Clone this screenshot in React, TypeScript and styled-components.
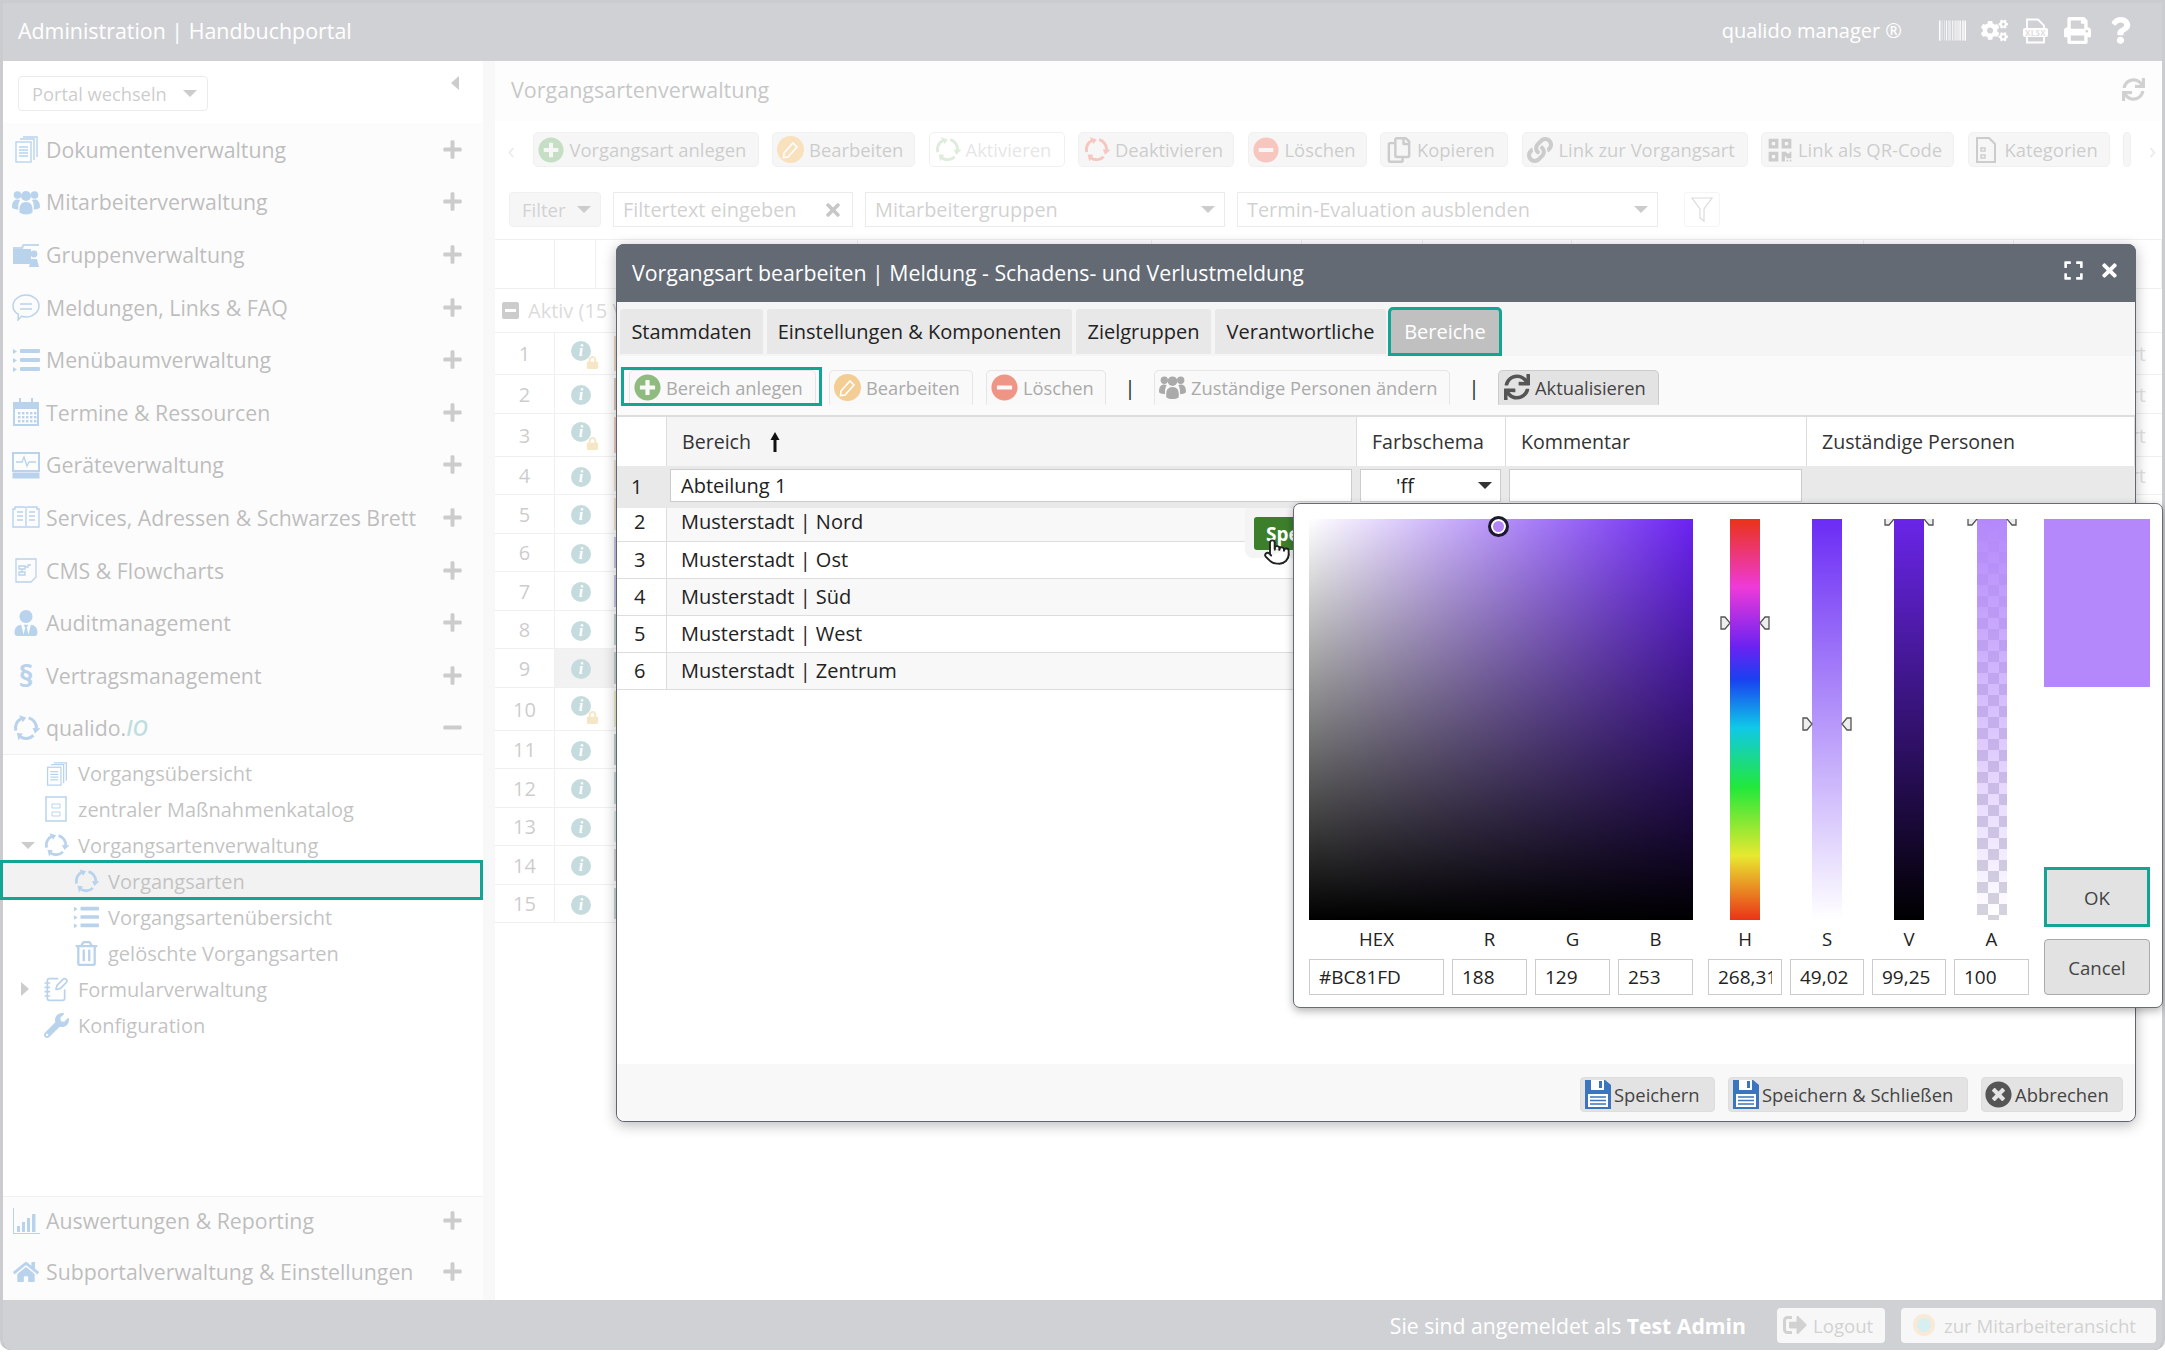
import React from 'react';
import styled, { createGlobalStyle } from 'styled-components';
import {
  FaPlusCircle, FaMinusCircle, FaTimesCircle, FaSync, FaLink, FaQrcode, FaRegCopy,
  FaBarcode, FaCogs, FaPrint, FaQuestion, FaWrench, FaHome, FaUserTie, FaLock, FaRegTrashAlt,
  FaTimes, FaExpand, FaPlus, FaMinus, FaSignOutAlt,
} from 'react-icons/fa';
import { NotebookPen, Pointer } from 'lucide-react';

const TEAL = '#12a594';
const BLUE = '#166cc0';

const Global = createGlobalStyle`
  html, body { margin: 0; padding: 0; background: #fff; }
  body { font-family: "Open Sans", "Liberation Sans", sans-serif; color: #222; }
  * { box-sizing: border-box; }
`;

const Page = styled.div`
  position: relative; width: 2165px; height: 1350px; display: flex; flex-direction: column;
  border: 3px solid #cbccd0; border-bottom: 0; border-radius: 0 0 10px 10px; background: #fff;
`;
const TopBar = styled.header`
  height: 58px; flex: none; background: #636772; color: #fff; display: flex; align-items: center;
  justify-content: space-between; padding: 0 28px 3px 15px; font-size: 21.4px;
`;
const TopRight = styled.div`display: flex; align-items: center; gap: 15px; font-size: 20px;`;
const Brand = styled.span`margin-right: 22px;`;
const TopIcon = styled.span<{ $w: number }>`
  width: ${p => p.$w}px; height: 26px; display: flex; align-items: center; justify-content: center; font-size: 27px;
`;
const Content = styled.div`flex: 1; display: flex; min-height: 0;`;
const Sidebar = styled.nav`
  width: 480px; flex: none; display: flex; flex-direction: column; background: #f4f4f4; color: #222;
`;
const SideTop = styled.div`
  height: 62px; flex: none; display: flex; align-items: flex-start; justify-content: space-between;
  padding: 15px 24px 0 15px; background: #fff;
`;
const SelectBox = styled.div<{ $w: number }>`
  width: ${p => p.$w}px; height: 35px; border: 1px solid #bbb; border-radius: 4px; display: flex; align-items: center;
  justify-content: space-between; padding: 0 10px 0 13px; background: #fff; font-size: 18.3px; color: #555;
`;
const Caret = styled.span<{ $dir?: 'down' | 'left' | 'right'; $c?: string; $s?: number }>`
  display: inline-block; width: 0; height: 0; flex: none;
  ${p => {
    const s = p.$s ?? 7; const c = p.$c ?? '#444';
    if (p.$dir === 'left') return `border-top:${s}px solid transparent;border-bottom:${s}px solid transparent;border-right:${s + 1}px solid ${c};`;
    if (p.$dir === 'right') return `border-top:${s}px solid transparent;border-bottom:${s}px solid transparent;border-left:${s + 1}px solid ${c};`;
    return `border-left:${s}px solid transparent;border-right:${s}px solid transparent;border-top:${s}px solid ${c};`;
  }}
`;
const MenuRow = styled.div<{ $h?: number; $line?: boolean; $pb?: number }>`
  height: ${p => p.$h ?? 52.6}px; flex: none; display: flex; align-items: center; padding: 0 20px ${p => p.$pb ?? 0}px 9px;
  font-size: 21.3px; color: #222; ${p => p.$line ? 'border-top: 1px solid #ccc;' : ''}
`;
const MenuIcon = styled.span`
  width: 28px; margin-right: 6px; height: 28px; flex: none; display: flex; align-items: center; justify-content: center;
  color: ${BLUE}; font-size: 26px;
`;
const Para = styled.b`font-size: 31px; line-height: 28px;`;
const MenuLabel = styled.span`flex: 1; white-space: nowrap;`;
const Italic = styled.i`color: #2a8f9e; font-weight: 600;`;
const RowSign = styled.span`font-size: 21px; color: #555; display: flex;`;
const SubList = styled.div`
  flex: 1; background: #fff; border-top: 1px solid #ccc; display: flex; flex-direction: column; min-height: 0;
`;
const SubRow = styled.div<{ $indent: number; $active?: boolean }>`
  position: relative; height: 36px; flex: none; display: flex; align-items: center; padding-left: ${p => p.$indent}px;
  font-size: 20px; color: #333; background: ${p => p.$active ? '#d4d4d4' : 'transparent'}; white-space: nowrap;
`;
const SubIcon = styled.span`
  width: 26px; height: 28px; margin-right: 9px; flex: none; display: flex; align-items: center; justify-content: center;
  color: ${BLUE}; font-size: 25px;
`;
const CaretSlot = styled.span`width: 25px; flex: none; display: flex; padding-left: 3px;`;
const Highlight = styled.span`
  position: absolute; left: -3px; right: 0; top: -3px; bottom: -1px; border: 3px solid ${TEAL}; z-index: 20;
`;
const Gutter = styled.div`width: 12px; flex: none; background: #e6e6e6;`;
const Main = styled.main`flex: 1; min-width: 0; display: flex; flex-direction: column; background: #fff; color: #444;`;
const TitleBar = styled.div`
  height: 60px; flex: none; display: flex; align-items: center; justify-content: space-between; padding: 0 17px 4px 16px;
  font-size: 21.5px; font-weight: 400; color: #444; background: #f8f8f8;
`;
const SmallRefresh = styled.span`color: #666; font-size: 23px; display: flex;`;
const ToolRow = styled.div<{ $mt: number; $pl: number; $gap?: number }>`
  height: 35px; flex: none; margin-top: ${p => p.$mt}px; padding-left: ${p => p.$pl}px; display: flex; align-items: center;
  gap: ${p => p.$gap ?? 13.5}px; white-space: nowrap;
`;
const ToolBtn = styled.div<{ $w: number; $faint?: boolean }>`
  width: ${p => p.$w}px; height: 35px; flex: none; border: 1px solid #ccc; border-radius: 5px; display: flex; align-items: center;
  gap: 5px; padding-left: 4px; background: ${p => p.$faint ? '#fff' : '#e0e0e0'}; font-size: 18.4px; color: ${p => p.$faint ? '#aaa' : '#555'};
`;
const BtnIcon = styled.span<{ $c: string; $s?: number }>`
  flex: none; width: 27px; height: 28px; display: flex; align-items: center; justify-content: center; color: ${p => p.$c};
  font-size: ${p => p.$s ?? 26}px;
`;
const Chevron = styled.span`color: #bbb; font-size: 24px; width: 16px; text-align: center; flex: none; line-height: 33px;`;
const FilterBtn = styled.div`
  width: 92px; height: 35px; flex: none; display: flex; align-items: center; justify-content: space-between; padding: 0 9px 0 12px;
  background: #e0e0e0; border-radius: 4px; font-size: 18.6px; color: #666; border: 1px solid #ccc;
`;
const FilterField = styled.div<{ $w: number }>`
  width: ${p => p.$w}px; height: 35px; flex: none; display: flex; align-items: center; justify-content: space-between; padding: 0 9px;
  border: 1px solid #bbb; font-size: 19.9px; color: #666; background: #fff;
`;
const ClearMark = styled.span`font-size: 20px; color: #444; display: flex;`;
const FunnelBox = styled.div`
  width: 36px; height: 35px; flex: none; margin-left: 14px; border: 1px solid #ddd; border-radius: 3px; display: flex;
  align-items: center; justify-content: center; color: #888;
`;
const GridHead = styled.div`
  margin-top: 12px; height: 49px; flex: none; display: grid; grid-template-columns: 60px 41px 262px 294px 150px 121px 149px 292px 150px 1fr;
  border-top: 1px solid #ccc;
`;
const HeadCell = styled.div`border-right: 1px solid #ccc;`;
const GroupRow = styled.div`
  height: 45px; flex: none; display: flex; align-items: center; gap: 9px; padding-left: 7px; font-size: 20px; color: #888;
  border-top: 1px solid #ccc; border-bottom: 1px solid #ccc; white-space: nowrap;
`;
const MinusBox = styled.span`
  width: 17px; height: 17px; background: #555; border-radius: 2px; display: flex; align-items: center; justify-content: center;
  &::after { content: ""; width: 11px; height: 3px; background: #fff; }
`;
const DataRow = styled.div<{ $h: number }>`
  height: ${p => p.$h}px; flex: none; display: flex; align-items: stretch; border-bottom: 1px solid #ccc;
`;
const NumCell = styled.div`
  width: 60px; flex: none; display: flex; align-items: center; justify-content: center; border-right: 1px solid #ccc;
  font-size: 20px; color: #555;
`;
const InfoCell = styled.div<{ $on?: boolean; $lock?: boolean }>`
  position: relative; width: 59px; flex: none; display: flex; align-items: flex-start; padding: ${p => p.$lock ? 8 : 10}px 0 0 16px;
  background: ${p => p.$on ? '#d4d4d4' : 'transparent'};
`;
const InfoDot = styled.span`
  width: 20px; height: 20px; border-radius: 50%; background: #3e878e; color: #fff; display: flex; align-items: center;
  justify-content: center; font: italic bold 16px "Liberation Serif", serif;
`;
const LockMark = styled.span`position: absolute; left: 31px; top: 23px; font-size: 13px; color: #dcb040; display: flex;`;
const ColorBar = styled.span<{ $c: string }>`width: 6px; margin: 3px 0; flex: none; background: ${p => p.$c};`;
const RowEnd = styled.span`flex: 1; text-align: right; padding-right: 16px; font-size: 20px; color: #999; align-self: center;`;
const Veil = styled.div`position: absolute; inset: 0; background: rgba(255,255,255,.7); z-index: 10; border-radius: 0 0 8px 8px;`;
const PageFoot = styled.footer`
  height: 50px; flex: none; background: #636772; color: #fff; display: flex; align-items: center; justify-content: flex-end;
  padding-right: 6px; font-size: 21.2px; border-radius: 0 0 8px 8px;
`;
const FootBtn = styled.div<{ $w: number; $ml: number }>`
  width: ${p => p.$w}px; margin-left: ${p => p.$ml}px; height: 35px; flex: none; display: flex; align-items: center; gap: 6px; padding-left: 6px;
  background: #e4e4e4; border-radius: 4px; font-size: 18.6px; color: #666;
`;
const Ring = styled.span`
  width: 22px; height: 22px; border-radius: 50%; background: #7dc8d0; border: 4px solid #e8b878; margin-left: 6px; margin-right: 3px;
`;

const Dialog = styled.section`
  position: absolute; left: 613px; top: 241px; width: 1520px; height: 878px; z-index: 30; display: flex; flex-direction: column;
  background: #fff; border: 1px solid #5f6671; border-radius: 8px; box-shadow: 0 3px 14px rgba(0,0,0,.28);
`;
const DialogHead = styled.div`
  height: 58px; flex: none; margin: -1px -1px 0; padding: 0 16px 2px 16px; background: #636a74; color: #fff; border-radius: 8px 8px 0 0; font-size: 21.3px;
  display: flex; align-items: center; justify-content: space-between;
`;
const HeadIcons = styled.div`display: flex; align-items: center; gap: 15px; font-size: 21px; margin-bottom: 3px;`;
const Tabs = styled.div`
  height: 54px; flex: none; padding: 7px 0 0 3px; background: #f5f5f5; display: flex; align-items: flex-start; gap: 4px;
`;
const Tab = styled.div<{ $w: number; $active?: boolean }>`
  width: ${p => p.$w}px; height: 45px; display: flex; align-items: center; justify-content: center; font-size: 20px;
  background: ${p => p.$active ? '#c0c0c0' : '#e8e8e8'}; color: ${p => p.$active ? '#fff' : '#222'}; border-radius: 3px 3px 0 0;
  ${p => p.$active ? `outline: 3px solid ${TEAL}; outline-offset: -1px; font-weight: 500;` : ''}
`;
const DialogTools = styled.div`
  height: 61px; flex: none; display: flex; align-items: center; padding: 3px 0 0 12px; background: #fafafa; gap: 13px; position: relative;
  border-bottom: 2px solid #ddd;
`;
const DTool = styled.div<{ $w: number; $on?: boolean }>`
  position: relative; width: ${p => p.$w}px; height: 35px; flex: none; border: 1px solid ${p => p.$on ? '#ccc' : '#e6e6e6'}; border-bottom-color: transparent;
  border-radius: 5px 5px 0 0; display: flex; align-items: center; gap: 5px; padding-left: 4px; font-size: 18.3px;
  color: ${p => p.$on ? '#444' : '#aaa'}; background: ${p => p.$on ? '#e3e3e3' : '#f9f9f9'}; white-space: nowrap;
`;
const TealBox = styled.span`position: absolute; left: -9px; right: -7px; top: -4px; bottom: -2px; border: 3px solid ${TEAL};`;
const Sep = styled.span`font-size: 20px; color: #222; width: 22px; flex: none; text-align: center;`;
const Tbl = styled.div`position: relative; display: grid; grid-template-columns: 50px 690px 149px 301px 1fr; flex: none;`;
const Th = styled.div<{ $gray?: boolean }>`
  height: 49px; display: flex; align-items: center; gap: 18px; padding-left: 15px; font-size: 19.6px; color: #333;
  background: ${p => p.$gray ? '#f5f5f5' : '#fff'}; border-right: 1px solid #ddd;
`;
const EditCell = styled.div<{ $num?: boolean }>`
  height: 42px; background: #e9e9e9; padding: 3px 5px 6px 3px; font-size: 20px; color: #222;
  ${p => p.$num ? 'display:flex;align-items:center;padding:0 0 2px 14px;' : ''}
`;
const EditInput = styled.div<{ $pl?: number }>`
  height: 100%; background: #fff; border: 1px solid #ccc; display: flex; align-items: center; justify-content: space-between;
  padding: 0 8px 1px ${p => p.$pl ?? 10}px; font-size: 20px; overflow: hidden;
`;
const Td = styled.div<{ $h: number; $shade?: boolean; $num?: boolean; $pb?: number }>`
  height: ${p => p.$h}px; display: flex; align-items: center; font-size: 20px; color: #222; border-bottom: 1px solid #ddd;
  background: ${p => p.$shade ? '#f8f8f8' : '#fff'}; padding-left: ${p => p.$num ? 17 : 14}px; padding-bottom: ${p => p.$pb ?? 0}px; border-right: 1px solid #ddd;
  ${p => p.$num ? '' : 'grid-column: 2 / 3;'}
`;
const TdRest = styled.div<{ $h: number }>`height: ${p => p.$h}px; grid-column: 3 / 6;`;
const SavePop = styled.div`
  position: absolute; left: 628px; top: 91px; width: 60px; height: 50px; background: #f4f4f4; border-radius: 0 0 0 8px; padding: 9px 0 0 9px;
`;
const GreenBtn = styled.div`
  height: 33px; width: 100px; background: #3d7e2b; color: #fff; font-weight: 700; border-radius: 3px; font-size: 19px;
  display: flex; align-items: center; padding-left: 12px;
`;
const Hand = styled.span`position: absolute; left: 646px; top: 121px; display: flex; z-index: 2; color: #222;`;
const Spacer = styled.div`flex: 1;`;
const DialogFoot = styled.div`
  height: 57px; flex: none; background: #f8f8f8; border-radius: 0 0 8px 8px; display: flex; align-items: center; justify-content: flex-end; gap: 13px; padding: 3px 12px 0 0;
`;
const FootAction = styled.div<{ $w: number }>`
  width: ${p => p.$w}px; height: 35px; flex: none; background: #e3e3e3; border: 1px solid #ddd; border-radius: 4px; display: flex; align-items: center;
  gap: 3px; padding-left: 3px; font-size: 18.4px; color: #444; white-space: nowrap;
`;

const Picker = styled.div`
  position: absolute; left: 676px; top: 258px; width: 870px; height: 505px; z-index: 3; background: #fff; border: 1px solid #666c76;
  border-radius: 7px; box-shadow: 0 3px 8px rgba(0,0,0,.3); padding: 15px 0 0 15px;
  display: grid; grid-template-columns: 135px 75px 75px 75px 81px 74px 74px 75px 113px; column-gap: 8px;
  grid-template-rows: 401px 39px 36px; align-items: start;
`;
const SVArea = styled.div`
  grid-column: 1 / 5; position: relative; height: 401px;
  background: linear-gradient(to top, #000, transparent), linear-gradient(to right, #fff, #6a22f2);
`;
const SVDot = styled.span`
  position: absolute; left: 179px; top: -3px; width: 21px; height: 21px; border-radius: 50%; border: 3px solid #1a1a2a;
  background: #b386f7; box-shadow: inset 0 0 0 2px #fff;
`;
const BarCol = styled.div<{ $pad?: boolean }>`
  position: relative; height: 401px; display: flex; justify-content: center; padding-left: ${p => p.$pad ? 7 : 0}px;
`;
const BarClip = styled.div<{ $bg: string }>`
  position: relative; width: 30px; height: 401px; background: ${p => p.$bg}; clip-path: inset(0 -20px);
`;
const Handle = styled.svg<{ $y: number }>`position: absolute; left: -10px; top: ${p => p.$y - 7}px;`;
const Swatch = styled.div`width: 106px; height: 168px; background: #b488fb;`;
const SideCol = styled.div`grid-column: 9; grid-row: 1 / 4; padding-left: 7px; display: flex; flex-direction: column;`;
const OkBtn = styled.div`
  height: 60px; width: 106px; border: 3px solid ${TEAL}; background: #e2e2e2; display: flex; align-items: center; justify-content: center;
  font-size: 18.6px; color: #444;
`;
const CancelBtn = styled.div`
  margin-top: 12px; height: 56px; width: 106px; border: 1px solid #aaa; border-radius: 4px; background: #e2e2e2; display: flex; align-items: center; justify-content: center;
  font-size: 18.6px; color: #444;
`;
const PLabel = styled.div<{ $pad?: boolean }>`
  height: 36px; display: flex; align-items: center; justify-content: center; font-size: 18.6px; color: #222; padding-left: ${p => p.$pad ? 7 : 0}px;
`;
const PFieldWrap = styled.div<{ $pad?: boolean }>`padding-left: ${p => p.$pad ? 7 : 0}px;`;
const PField = styled.div`
  height: 36px; border: 1px solid #ccc; background: #fff; padding: 0 9px; display: flex; align-items: center; font-size: 19px; color: #222; white-space: nowrap;
`;
const PText = styled.span`display: block; overflow: hidden; min-width: 0;`;
const SwatchWrap = styled.div`height: 408px; display: flex; flex-direction: column; justify-content: space-between;`;

/* ---- drawn icons ---- */
const Docs = ({ s = 28 }: { s?: number }) => (
  <svg width={s} height={s} viewBox="0 0 28 28" fill="none" stroke="currentColor" strokeWidth="1.4">
    <path d="M11 2h14v20M8 4h14v21" /><rect x="4" y="7" width="15" height="20" fill="#fff" />
    <path d="M7 12h9M7 15h9M7 18h9M7 21h9" />
  </svg>
);
const Users = ({ s = 28 }: { s?: number }) => (
  <svg width={s} height={s} viewBox="0 0 28 28" fill="currentColor">
    <circle cx="14" cy="8" r="5" /><circle cx="5.500" cy="7" r="3.800" /><circle cx="22.500" cy="7" r="3.800" />
    <path d="M0 19c0-5 2-7.500 5.500-7.500 1 0 1.800.2 2.500.6-1.200 1.700-1.800 4-1.800 7v2.400C3 21.300 0 20.500 0 19zM28 19c0-5-2-7.500-5.500-7.500-1 0-1.800.2-2.500.6 1.200 1.700 1.800 4 1.800 7v2.400c3.200-.2 6.200-1 6.200-2.500z" />
    <path d="M14 14c4.600 0 6.500 3 6.500 7.500v3c-3 2.600-10 2.600-13 0v-3C7.500 17 9.400 14 14 14z" />
  </svg>
);
const FolderUser = () => (
  <svg width="28" height="28" viewBox="0 0 28 28" fill="currentColor">
    <path d="M1 7h8l2 -3h16v2H12L11 9h-1v15H1z" opacity=".85" /><path d="M1 9h18v15H1z" /><circle cx="22" cy="14" r="3.4" /><path d="M17 27l2-8h6l2 8z" />
  </svg>
);
const Bubble = () => (
  <svg width="28" height="28" viewBox="0 0 28 28" fill="none" stroke="currentColor" strokeWidth="1.5">
    <path d="M14 2c7 0 13 5 13 11s-6 11-13 11c-1.500 0-3-.2-4.400-.7L6 27l.5-5.500C3 19.500 1 16.500 1 13 1 7 7 2 14 2z" /><path d="M8 11h12M8 16h12" />
  </svg>
);
const TreeList = ({ s = 28 }: { s?: number }) => (
  <svg width={s} height={s} viewBox="0 0 28 28" fill="currentColor">
    <path d="M1 3l4 2.500L1 8zM1 12l4 2.500L1 17zM1 21l4 2.500L1 26z" /><rect x="8" y="3" width="20" height="4" rx="1" /><rect x="8" y="12" width="20" height="4" rx="1" /><rect x="8" y="21" width="20" height="4" rx="1" />
  </svg>
);
const Cal = () => (
  <svg width="28" height="28" viewBox="0 0 28 28" fill="currentColor">
    <path d="M1 4h26v24H1zM3 11v15h22V11z" fillRule="evenodd" /><rect x="7" y="0" width="2" height="7" /><rect x="19" y="0" width="2" height="7" />
    {[14, 18, 22].map(y => [6, 10, 14, 18, 22].map(x => <rect key={`${x}${y}`} x={x} y={y} width="2.400" height="2.400" />))}
  </svg>
);
const Device = () => (
  <svg width="28" height="28" viewBox="0 0 28 28" fill="none" stroke="currentColor">
    <rect x="1" y="2" width="26" height="18" strokeWidth="2" /><path d="M4 11h6l2-5 3 9 2-4h7" strokeWidth="1.300" /><rect x="1" y="22" width="26" height="5" fill="currentColor" />
  </svg>
);
const Book = () => (
  <svg width="28" height="22" viewBox="0 0 28 22" fill="none" stroke="currentColor" strokeWidth="1.400">
    <path d="M1 3h2V1h9c1 0 2 .5 2 1.500C14 1.500 15 1 16 1h9v2h2v18H1z" /><path d="M14 3v17M5 6h6M5 10h6M5 14h6M17 6h6M17 10h6M17 14h6" />
  </svg>
);
const FlowPage = () => (
  <svg width="24" height="28" viewBox="0 0 24 28" fill="none" stroke="currentColor" strokeWidth="1.300">
    <path d="M2 3h20v18l-5 5H2z" /><path d="M5 10h6v3H5zM5 16h6v3H5zM8 13v3M11 11h3v-2h3" />
  </svg>
);
const Catalog = () => (
  <svg width="24" height="28" viewBox="0 0 24 28" fill="none" stroke="currentColor" strokeWidth="1.500">
    <path d="M2 2h20v24H2z" /><path d="M8 9h8v4H8zM8 17h8v4H8z" strokeWidth="1" />
  </svg>
);
const Bars = () => (
  <svg width="28" height="28" viewBox="0 0 28 28" fill="currentColor">
    <path d="M1 1h1v25h26v1H1z" /><rect x="5" y="19" width="3" height="6" /><rect x="10" y="15" width="3" height="10" /><rect x="15" y="11" width="3" height="14" /><rect x="20" y="7" width="3.500" height="18" />
  </svg>
);
const polar = (deg: number, r: number) => {
  const a = (deg * Math.PI) / 180;
  return `${(14 + r * Math.cos(a)).toFixed(2)} ${(14 + r * Math.sin(a)).toFixed(2)}`;
};
const Spin = ({ s = 28, c = 'currentColor' }: { s?: number; c?: string }) => (
  <svg width={s} height={s} viewBox="0 0 28 28" fill={c}>
    {[-75, 45, 165].map(a0 => (
      <g key={a0}>
        <path d={`M${polar(a0, 10.5)} A10.500 10.500 0 0 1 ${polar(a0 + 78, 10.5)}`} fill="none" stroke={c} strokeWidth="3" />
        <path d={`M${polar(a0 + 76, 14.5)} L${polar(a0 + 76, 6.5)} L${polar(a0 + 106, 10.5)}z`} />
      </g>
    ))}
  </svg>
);
const Pencil = ({ bg }: { bg: string }) => (
  <svg width="27" height="27" viewBox="0 0 27 27">
    <circle cx="13.500" cy="13.500" r="13.500" fill={bg} />
    <path d="M7 17l9-10 4 4-9 10-4.500.500z" fill="none" stroke="#fff" strokeWidth="1.600" />
  </svg>
);
const KatDoc = () => (
  <svg width="22" height="28" viewBox="0 0 22 28" fill="none" stroke="currentColor" strokeWidth="2">
    <path d="M2 2h12l6 6v18H2z" /><path d="M6 12h4v3H6zM6 19h4v3H6z" strokeWidth="1.400" />
  </svg>
);
const Xlsx = () => (
  <svg width="25" height="26" viewBox="0 0 25 26" fill="none" stroke="#fff" strokeWidth="1.800">
    <path d="M4 10V1.500h11l6 6V10M4 19v5.500h17V19" />
    <rect x="0" y="10" width="25" height="9" rx="2" fill="#fff" stroke="none" />
    <text x="12.500" y="17.500" fontSize="8" fontFamily="Open Sans" fontWeight="700" fill="#8a8e96" stroke="none" textAnchor="middle" letterSpacing=".4">XLSX</text>
  </svg>
);
const Funnel = () => (
  <svg width="22" height="26" viewBox="0 0 22 26" fill="none" stroke="currentColor" strokeWidth="1.200">
    <path d="M1 1h20l-8 11v12l-4-3v-9z" />
  </svg>
);
const UpArrow = () => (
  <svg width="12" height="20" viewBox="0 0 12 20" fill="#111"><path d="M6 0l4.500 8H7.500v12h-3V8h-3z" /></svg>
);
const Floppy = () => (
  <svg width="26" height="30" viewBox="0 0 26 30">
    <path d="M0 1h20l6 5v24H0z" fill="#3a75bd" />
    <path d="M6 1h13v10H6z" fill="#fff" /><path d="M14 2h3v7h-3z" fill="#3a75bd" />
    <path d="M3 15h20v13H3z" fill="#fff" /><path d="M5 18h16M5 21.500h16M5 25h16" stroke="#3a75bd" strokeWidth="1.500" />
  </svg>
);
const HandleMarks = ({ y }: { y: number }) => (
  <Handle $y={y} width="50" height="14" viewBox="0 0 50 14" fill="#eee" stroke="#555" strokeWidth="1.300">
    <path d="M1 1h4l5 6-5 6H1zM49 1h-4l-5 6 5 6h4z" />
  </Handle>
);

const menuTop = [
  { t: 'Dokumentenverwaltung', i: <Docs /> },
  { t: 'Mitarbeiterverwaltung', i: <Users /> },
  { t: 'Gruppenverwaltung', i: <FolderUser /> },
  { t: 'Meldungen, Links & FAQ', i: <Bubble /> },
  { t: 'Menübaumverwaltung', i: <TreeList /> },
  { t: 'Termine & Ressourcen', i: <Cal /> },
  { t: 'Geräteverwaltung', i: <Device /> },
  { t: 'Services, Adressen & Schwarzes Brett', i: <Book /> },
  { t: 'CMS & Flowcharts', i: <FlowPage /> },
  { t: 'Auditmanagement', i: <FaUserTie /> },
  { t: 'Vertragsmanagement', i: <Para>§</Para> },
];
const mainTools = [
  { t: 'Vorgangsart anlegen', w: 226, i: <BtnIcon $c="#3f8f3a"><FaPlusCircle /></BtnIcon> },
  { t: 'Bearbeiten', w: 143, i: <BtnIcon $c=""><Pencil bg="#e89a20" /></BtnIcon> },
  { t: 'Aktivieren', w: 136, faint: true, i: <BtnIcon $c="#8cc088"><Spin s={27} /></BtnIcon> },
  { t: 'Deaktivieren', w: 156, i: <BtnIcon $c="#e0402a"><Spin s={27} /></BtnIcon> },
  { t: 'Löschen', w: 119, i: <BtnIcon $c="#e0402a"><FaMinusCircle /></BtnIcon> },
  { t: 'Kopieren', w: 128, i: <BtnIcon $c="#555"><FaRegCopy /></BtnIcon> },
  { t: 'Link zur Vorgangsart', w: 226, i: <BtnIcon $c="#555"><FaLink /></BtnIcon> },
  { t: 'Link als QR-Code', w: 193, i: <BtnIcon $c="#555"><FaQrcode /></BtnIcon> },
  { t: 'Kategorien', w: 142, i: <BtnIcon $c="#555"><KatDoc /></BtnIcon> },
];
const rowH = [42, 39, 43, 38, 39, 38, 39, 38, 39, 43, 38, 39, 38, 39, 38];
const rowBars = ['#c08a3c', '#8a4a2c', '#c8503a', '#d0a870', '#c8a070', '#3c4ab0', '#3c4ab0', '#3c7070', '#3c7070', '#c8c040', '#3c7070', '#3c7878', '#88c0a8', '#777', '#3c7868'];
const locked = [0, 2, 9];
const areas = ['Musterstadt | Nord', 'Musterstadt | Ost', 'Musterstadt | Süd', 'Musterstadt | West', 'Musterstadt | Zentrum'];
const fields: [string, string, boolean][] = [
  ['HEX', '#BC81FD', false], ['R', '188', false], ['G', '129', false], ['B', '253', false],
  ['H', '268,31', true], ['S', '49,02', false], ['V', '99,25', false], ['A', '100', false],
];
const HUE = 'linear-gradient(to bottom,#ea3317 0%,#ee3ad8 17%,#6a22f2 32%,#1a40f0 40%,#10c8e8 52%,#22e83a 67%,#e8e830 84%,#ea3317 100%)';
const SAT = 'linear-gradient(to bottom,#6b2cf5,#fff)';
const VAL = 'linear-gradient(to bottom,#6a25e8,#000)';
const ALPHA = 'linear-gradient(to bottom,#b488fb,transparent),repeating-conic-gradient(#d4d4dc 0 25%,#fff 0 50%) 0 0/22px 22px';

export default function App() {
  return (
    <>
      <Global />
      <Page>
        <TopBar>
          <span>Administration | Handbuchportal</span>
          <TopRight>
            <Brand>qualido manager ®</Brand>
            <TopIcon $w={27}><FaBarcode /></TopIcon>
            <TopIcon $w={27}><FaCogs /></TopIcon>
            <TopIcon $w={25}><Xlsx /></TopIcon>
            <TopIcon $w={28}><FaPrint /></TopIcon>
            <TopIcon $w={28}><FaQuestion /></TopIcon>
          </TopRight>
        </TopBar>
        <Content>
          <Sidebar>
            <SideTop>
              <SelectBox $w={190}>Portal wechseln <Caret $c="#555" /></SelectBox>
              <Caret $dir="left" $c="#555" />
            </SideTop>
            {menuTop.map(m => (
              <MenuRow key={m.t}>
                <MenuIcon>{m.i}</MenuIcon>
                <MenuLabel>{m.t}</MenuLabel>
                <RowSign><FaPlus /></RowSign>
              </MenuRow>
            ))}
            <MenuRow>
              <MenuIcon><Spin /></MenuIcon>
              <MenuLabel>qualido.<Italic>IO</Italic></MenuLabel>
              <RowSign><FaMinus /></RowSign>
            </MenuRow>
            <SubList>
              <SubRow $indent={15}><CaretSlot /><SubIcon><Docs s={25} /></SubIcon>Vorgangsübersicht</SubRow>
              <SubRow $indent={15}><CaretSlot /><SubIcon><Catalog /></SubIcon>zentraler Maßnahmenkatalog</SubRow>
              <SubRow $indent={15}><CaretSlot><Caret $c="#555" /></CaretSlot><SubIcon><Spin s={26} /></SubIcon>Vorgangsartenverwaltung</SubRow>
              <SubRow $indent={70} $active><SubIcon><Spin s={26} /></SubIcon>Vorgangsarten<Highlight /></SubRow>
              <SubRow $indent={70}><SubIcon><TreeList s={26} /></SubIcon>Vorgangsartenübersicht</SubRow>
              <SubRow $indent={70}><SubIcon><FaRegTrashAlt /></SubIcon>gelöschte Vorgangsarten</SubRow>
              <SubRow $indent={15}><CaretSlot><Caret $dir="right" $c="#555" /></CaretSlot><SubIcon><NotebookPen size={27} strokeWidth={1.6} /></SubIcon>Formularverwaltung</SubRow>
              <SubRow $indent={15}><CaretSlot /><SubIcon><FaWrench /></SubIcon>Konfiguration</SubRow>
              <Spacer />
            </SubList>
            <MenuRow $h={51} $line $pb={3}>
              <MenuIcon><Bars /></MenuIcon><MenuLabel>Auswertungen &amp; Reporting</MenuLabel><RowSign><FaPlus /></RowSign>
            </MenuRow>
            <MenuRow $h={53} $pb={4}>
              <MenuIcon><FaHome /></MenuIcon><MenuLabel>Subportalverwaltung &amp; Einstellungen</MenuLabel><RowSign><FaPlus /></RowSign>
            </MenuRow>
          </Sidebar>
          <Gutter />
          <Main>
            <TitleBar>
              <span>Vorgangsartenverwaltung</span>
              <SmallRefresh><FaSync /></SmallRefresh>
            </TitleBar>
            <ToolRow $mt={11} $pl={8}>
              <Chevron>‹</Chevron>
              {mainTools.map(b => (
                <ToolBtn key={b.t} $w={b.w} $faint={b.faint}>{b.i}{b.t}</ToolBtn>
              ))}
              <ToolBtn $w={8} />
              <Chevron>›</Chevron>
            </ToolRow>
            <ToolRow $mt={25} $pl={14} $gap={12}>
              <FilterBtn>Filter <Caret $c="#555" /></FilterBtn>
              <FilterField $w={240}>Filtertext eingeben <ClearMark><FaTimes /></ClearMark></FilterField>
              <FilterField $w={360}>Mitarbeitergruppen <Caret $c="#555" /></FilterField>
              <FilterField $w={421}>Termin-Evaluation ausblenden <Caret $c="#555" /></FilterField>
              <FunnelBox><Funnel /></FunnelBox>
            </ToolRow>
            <GridHead>
              {Array.from({ length: 10 }, (_, i) => <HeadCell key={i} />)}
            </GridHead>
            <GroupRow><MinusBox />Aktiv (15 Vorgangsarten)</GroupRow>
            {rowH.map((h, i) => (
              <DataRow key={i} $h={h}>
                <NumCell>{i + 1}</NumCell>
                <InfoCell $on={i === 8} $lock={locked.includes(i)}>
                  <InfoDot>i</InfoDot>
                  {locked.includes(i) && <LockMark><FaLock /></LockMark>}
                </InfoCell>
                <ColorBar $c={rowBars[i]} />
                {i < 4 && <RowEnd>aktiviert</RowEnd>}
              </DataRow>
            ))}
          </Main>
        </Content>
        <PageFoot>
          <span>Sie sind angemeldet als <b>Test Admin</b></span>
          <FootBtn $w={108} $ml={31}><FaSignOutAlt size={24} />Logout</FootBtn>
          <FootBtn $w={255} $ml={16}><Ring />zur Mitarbeiteransicht</FootBtn>
        </PageFoot>
        <Veil />
        <Dialog>
          <DialogHead>
            <span>Vorgangsart bearbeiten | Meldung - Schadens- und Verlustmeldung</span>
            <HeadIcons><FaExpand /><FaTimes /></HeadIcons>
          </DialogHead>
          <Tabs>
            <Tab $w={143}>Stammdaten</Tab>
            <Tab $w={305}>Einstellungen &amp; Komponenten</Tab>
            <Tab $w={135}>Zielgruppen</Tab>
            <Tab $w={171}>Verantwortliche</Tab>
            <Tab $w={110} $active>Bereiche</Tab>
          </Tabs>
          <DialogTools>
            <DTool $w={187}>
              <TealBox />
              <BtnIcon $c="#8fbb7f" $s={27}><FaPlusCircle /></BtnIcon>Bereich anlegen
            </DTool>
            <DTool $w={144}><BtnIcon $c=""><Pencil bg="#f3cd94" /></BtnIcon>Bearbeiten</DTool>
            <DTool $w={120}><BtnIcon $c="#ef9585" $s={27}><FaMinusCircle /></BtnIcon>Löschen</DTool>
            <Sep>|</Sep>
            <DTool $w={296}><BtnIcon $c="#aaa"><Users /></BtnIcon>Zuständige Personen ändern</DTool>
            <Sep>|</Sep>
            <DTool $w={161} $on><BtnIcon $c="#555"><FaSync /></BtnIcon>Aktualisieren</DTool>
          </DialogTools>
          <Tbl>
            <Th />
            <Th $gray>Bereich <UpArrow /></Th>
            <Th>Farbschema</Th>
            <Th>Kommentar</Th>
            <Th>Zuständige Personen</Th>
            <EditCell $num>1</EditCell>
            <EditCell><EditInput>Abteilung 1</EditInput></EditCell>
            <EditCell><EditInput $pl={35}>'ff <Caret $c="#333" $s={7} /></EditInput></EditCell>
            <EditCell><EditInput /></EditCell>
            <EditCell />
            {areas.map((a, i) => {
              const h = i === 0 ? 33.5 : 37;
              const pb = i === 0 ? 5 : 0;
              return (
                <React.Fragment key={a}>
                  <Td $h={h} $num $pb={pb}>{i + 2}</Td>
                  <Td $h={h} $shade={i % 2 === 0} $pb={pb}>{a}</Td>
                  <TdRest $h={h} />
                </React.Fragment>
              );
            })}
            <SavePop><GreenBtn>Speichern</GreenBtn></SavePop>
            <Hand><Pointer size={28} fill="#fff" strokeWidth={1.6} /></Hand>
          </Tbl>
          <Picker>
            <SVArea><SVDot /></SVArea>
            <BarCol $pad><BarClip $bg={HUE}><HandleMarks y={104} /></BarClip></BarCol>
            <BarCol><BarClip $bg={SAT}><HandleMarks y={205} /></BarClip></BarCol>
            <BarCol><BarClip $bg={VAL}><HandleMarks y={0} /></BarClip></BarCol>
            <BarCol><BarClip $bg={ALPHA}><HandleMarks y={0} /></BarClip></BarCol>
            <SideCol>
              <SwatchWrap>
                <Swatch />
                <OkBtn>OK</OkBtn>
              </SwatchWrap>
              <CancelBtn>Cancel</CancelBtn>
            </SideCol>
            {fields.map(([l, , pad]) => <PLabel key={l} $pad={pad}>{l}</PLabel>)}
            {fields.map(([l, v, pad]) => <PFieldWrap key={l} $pad={pad}><PField><PText>{v}</PText></PField></PFieldWrap>)}
          </Picker>
          <Spacer />
          <DialogFoot>
            <FootAction $w={135}><BtnIcon $c="" $s={28}><Floppy /></BtnIcon>Speichern</FootAction>
            <FootAction $w={240}><BtnIcon $c="" $s={28}><Floppy /></BtnIcon>Speichern &amp; Schließen</FootAction>
            <FootAction $w={142}><BtnIcon $c="#555" $s={27}><FaTimesCircle /></BtnIcon>Abbrechen</FootAction>
          </DialogFoot>
        </Dialog>
      </Page>
    </>
  );
}
